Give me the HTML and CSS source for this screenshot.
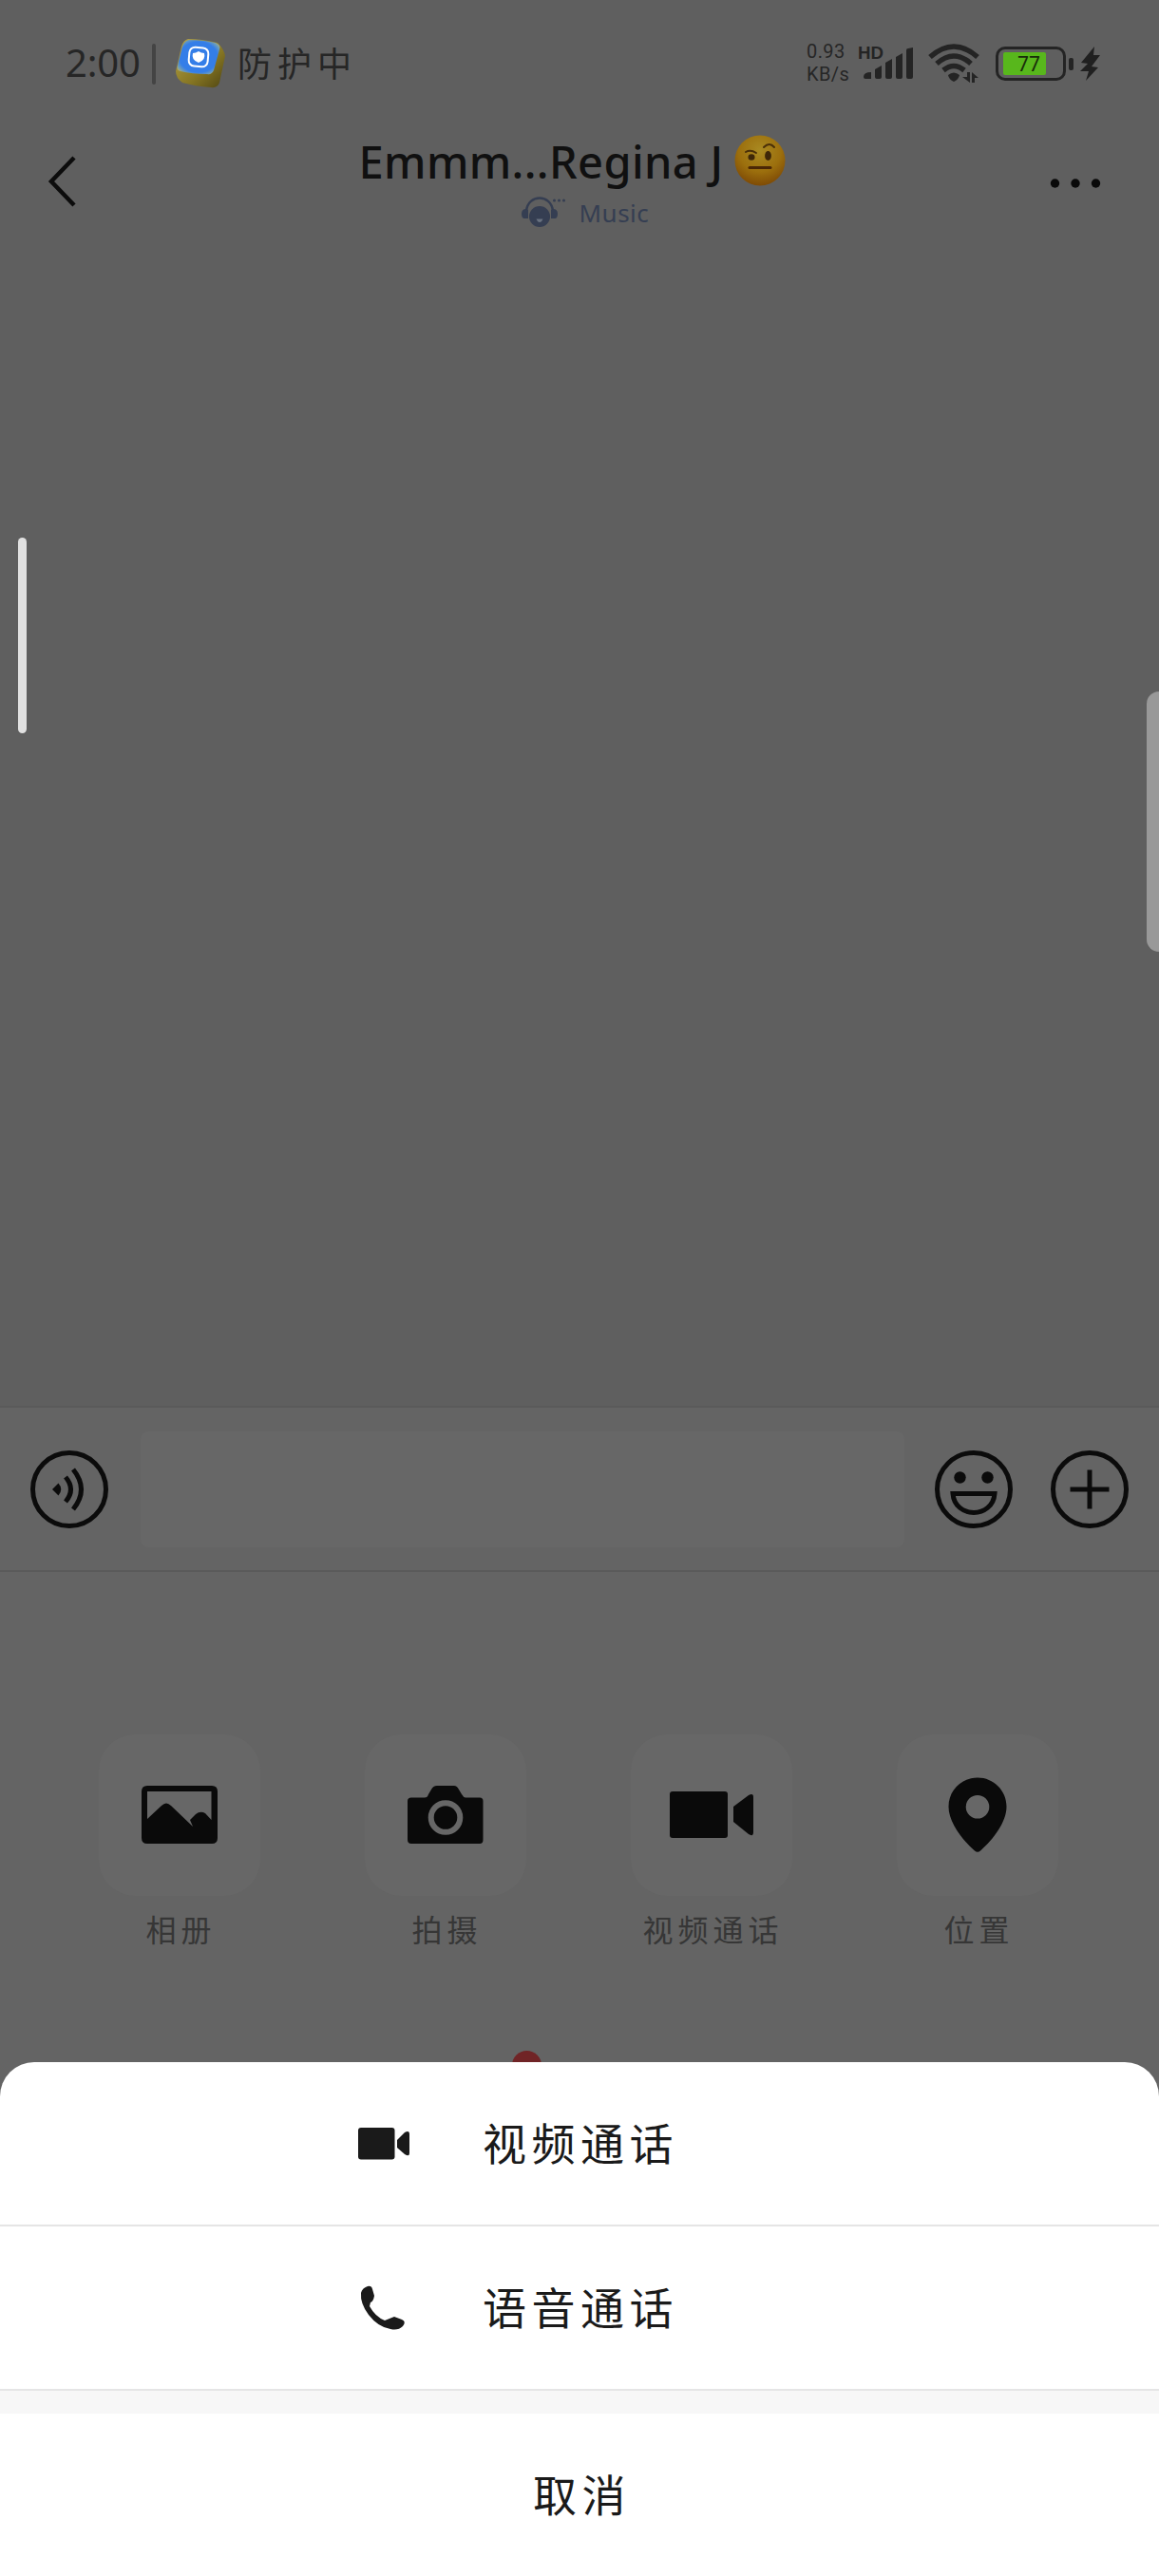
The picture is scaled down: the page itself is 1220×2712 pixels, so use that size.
FILE: index.html
```html
<!DOCTYPE html>
<html lang="zh-CN">
<head>
<meta charset="utf-8">
<title>Emmm...Regina J</title>
<link rel="stylesheet" href="styles.css">
</head>
<body>
<main class="screen">
  <div class="status">
    <span class="clock">2:00</span>
    <span class="divider"></span>
    <svg class="guard" width="54" height="54" viewBox="0 0 54 54">
      <defs>
        <linearGradient id="side" x1="0" y1="0" x2="1" y2="1"><stop offset="0" stop-color="#b9a648"/><stop offset=".6" stop-color="#857523"/><stop offset="1" stop-color="#4f4512"/></linearGradient>
        <radialGradient id="face" r=".62"><stop offset=".72" stop-color="#347ee8"/><stop offset=".88" stop-color="#6e9dba"/><stop offset="1" stop-color="#bcae5c"/></radialGradient>
      </defs>
      <path d="M14 1 Q28 1 45 5 Q52 12 53 19 L47 47 Q45 53 38 52 Q22 51 8 47 Q1 42 1 35 L7 9 Q9 2 14 1Z" fill="url(#side)"/>
      <path d="M15 2 Q30 2 43 5 Q49 7 47 12 L41 34 Q39 39 34 38 Q18 38 6 35 Q1 34 3 29 L8 9 Q10 3 15 2Z" fill="url(#face)"/>
      <rect x="15" y="10" width="20" height="20" rx="6" fill="none" stroke="#fff" stroke-width="2" transform="rotate(5 25 20)"/>
      <path d="M25 14 Q28 16 31 16 Q33 23 25 26 Q17 23 19 16 Q22 16 25 14Z" fill="#fff"/>
    </svg>
    <span class="guard-text">防护中</span>
    <span class="speed"><span>0.93</span><span>KB/s</span></span>
    <svg class="signal" width="60" height="40" viewBox="0 0 60 40">
      <text class="hd" x="0" y="15" textLength="27" lengthAdjust="spacingAndGlyphs">HD</text>
      <g fill="#242424"><path d="M6 34Q6 29 14 29V36H8Q6 36 6 34Z"/><path d="M18 26L25 22V34Q25 36 23 36H20Q18 36 18 34Z"/><path d="M29 19L36 15V34Q36 36 34 36H31Q29 36 29 34Z"/><path d="M40 13L47 9V34Q47 36 45 36H42Q40 36 40 34Z"/><path d="M51 6Q51 4 53 4L58 3V34Q58 36 56 36H53Q51 36 51 34Z"/></g>
    </svg>
    <svg class="wifi" width="54" height="42" viewBox="0 0 54 42">
      <g fill="none" stroke="#242424" stroke-width="5.5"><path d="M2 14Q27 -8 52 14"/><path d="M9 21Q27 5 45 21"/><path d="M16 28Q27 19 38 28"/></g>
      <path d="M21 33Q27 28 33 33Q32 38 27 40Q22 38 21 33Z" fill="#242424"/>
      <path d="M41 30H44V41L36 35H41ZM46 41V30L53 36H49V41Z" fill="#242424"/>
    </svg>
    <span class="battery"><span class="charge">77</span></span>
    <span class="nub"></span>
    <svg class="bolt" width="22" height="38" viewBox="0 0 22 38"><path d="M15 1L1 18L8 19L0 27H9L6 37L19 23L12 22L21 10H14Z" fill="#202020"/></svg>
  </div>

  <header class="header">
    <svg class="back" width="30" height="54" viewBox="0 0 30 54"><path d="M27 2L3 27L27 52" fill="none" stroke="#0c0c0c" stroke-width="4.5"/></svg>
    <div class="titles">
      <h1 class="title"><span class="name">Emmm...Regina J</span>
        <svg width="54" height="54" viewBox="0 0 54 54">
          <defs><radialGradient id="skin" cx=".5" cy=".3" r=".7"><stop offset="0" stop-color="#a98a22"/><stop offset=".6" stop-color="#9c6f0d"/><stop offset="1" stop-color="#7e4a05"/></radialGradient></defs>
          <circle cx="27" cy="27" r="26.500" fill="url(#skin)"/>
          <ellipse cx="18" cy="23.500" rx="3.500" ry="3.300" fill="#3e2708"/><ellipse cx="35.500" cy="22" rx="3.400" ry="5" fill="#3e2708"/>
          <path d="M12 18Q17 15 23 19M31 13Q37 7 42 13" fill="none" stroke="#4a2f08" stroke-width="2" stroke-linecap="round"/>
          <path d="M16 34.500H38" stroke="#4b2705" stroke-width="3" stroke-linecap="round"/>
        </svg>
      </h1>
      <div class="mood">
        <svg width="46" height="32" viewBox="0 0 46 32">
          <path d="M5 14C7 -4 31 -4 33 14" fill="none" stroke="#353e52" stroke-width="2.500"/>
          <path d="M5 12L7 13V22H3Q0 22 0 17Q0 12 5 12ZM33 12L31 13V22H35Q38 22 38 17Q38 12 33 12Z" fill="#353e52"/>
          <circle cx="19" cy="20" r="11" fill="#353e52"/><path d="M15.500 22.500H22.500Q21 26 19 26Q17 26 15.500 22.500Z" fill="#68717f"/>
          <g fill="#353e52"><circle cx="34.500" cy="3" r="1.500"/><circle cx="39.500" cy="3" r="1.500"/><circle cx="44.500" cy="3" r="1.500"/></g>
        </svg>
        <span class="music">Music</span>
      </div>
    </div>
    <svg class="more" width="54" height="12" viewBox="0 0 54 12"><g fill="#0a0a0a"><circle cx="5.500" cy="6" r="4.700"/><circle cx="27" cy="6" r="4.700"/><circle cx="48.500" cy="6" r="4.700"/></g></svg>
  </header>

  <section class="chat"></section>

  <div class="composer">
    <svg width="82" height="82" viewBox="0 0 82 82"><g fill="none" stroke="#0b0b0b" stroke-width="5"><circle cx="41" cy="41" r="38.500"/><path d="M37 28Q48 41 37 54M45 20Q62 41 45 62"/></g><path d="M23 41L29.500 34.500Q35 41 29.500 47.500Z" fill="#0b0b0b"/></svg>
    <div class="input"></div>
    <svg class="smile" width="82" height="82" viewBox="0 0 82 82"><g fill="none" stroke="#0b0b0b" stroke-width="5"><circle cx="41" cy="41" r="38.500"/><path d="M19 45.500H63C61 72 21 72 19 45.500Z"/></g><circle cx="26.500" cy="28.500" r="6.200" fill="#0b0b0b"/><circle cx="55.500" cy="28.500" r="6.200" fill="#0b0b0b"/></svg>
    <svg width="82" height="82" viewBox="0 0 82 82"><g fill="none" stroke="#0b0b0b" stroke-width="5"><circle cx="41" cy="41" r="38.500"/><path d="M20.500 41H61.500M41 20.500V61.500"/></g></svg>
  </div>

  <section class="panel">
    <div class="tool"><div class="tile">
      <svg width="80" height="62" viewBox="0 0 80 62"><path fill-rule="evenodd" d="M6 0H74Q80 0 80 6V55Q80 61 74 61H6Q0 61 0 55V6Q0 0 6 0ZM6 6V35L21 21Q26 16 31 21L54 43L51 36L57 30Q62 26 67 29L73.500 36V6Z" fill="#0a0a0a"/></svg>
    </div><span>相册</span></div>
    <div class="tool"><div class="tile">
      <svg width="80" height="62" viewBox="0 0 80 62"><path d="M4 12.500H18Q21 12.500 22 9L25 4Q27 0 31 0H49Q52 0 54 4L57 9Q59 12.500 61 12.500H76Q79.500 12.500 79.500 16V57Q79.500 61 76 61H4Q0 61 0 57V16Q0 12.500 4 12.500Z" fill="#0a0a0a"/><circle cx="40" cy="33.500" r="15.300" fill="none" stroke="#676767" stroke-width="6"/></svg>
    </div><span>拍摄</span></div>
    <div class="tool"><div class="tile">
      <svg class="cam" width="90" height="50" viewBox="0 0 90 50"><rect width="61" height="49" rx="3" fill="#0a0a0a"/><path d="M67 16L83 4Q88 1 88 6V43Q88 48 83 45L67 32Z" fill="#0a0a0a"/></svg>
    </div><span>视频通话</span></div>
    <div class="tool"><div class="tile">
      <svg width="62" height="80" viewBox="0 0 62 80"><path fill-rule="evenodd" d="M31 0.500C48 .5 61.500 14 61.500 31C61.500 47 48 65 34 77.500Q31 80 28 77.500C14 65 .5 47 .5 31C.5 14 14 .5 31 .5ZM31 19A12.300 12.300 0 1 0 31 43.600A12.300 12.300 0 1 0 31 19Z" fill="#0a0a0a"/></svg>
    </div><span>位置</span></div>
  </section>

  <i class="grip"></i>
  <i class="edge"></i>
  <i class="badge"></i>

  <section class="sheet">
    <div class="option">
      <svg width="54" height="34" viewBox="0 0 54 34"><rect width="38.500" height="33.500" rx="3" fill="#1a1a1a"/><path d="M41 13L49 5Q54 2 54 7V27Q54 31 49 28L41 21Z" fill="#1a1a1a"/></svg>
      <span>视频通话</span>
    </div>
    <div class="option">
      <svg width="54" height="48" viewBox="0 0 54 48"><path d="M10 1Q14 0 15 4L17 11Q16 17 13 18L12 22Q18 33 28 37L38 33L46 36Q51 38 47 43Q42 48 34 46Q21 44 11 31Q2 19 3 8Q4 3 10 1Z" fill="#1a1a1a"/></svg>
      <span>语音通话</span>
    </div>
    <div class="gap"></div>
    <div class="cancel">取消</div>
  </section>
</main>
</body>
</html>
```
FILE: styles.css
```css
* { box-sizing: border-box; }
body { margin: 0; background: #5f5f5f; font-family: "Noto Sans", "Noto Sans CJK SC", sans-serif; }
svg { display: block; flex: none; overflow: visible; }
.screen { position: relative; display: flex; flex-direction: column; width: 1220px; height: 2712px; overflow: hidden; }

.status { display: flex; align-items: center; height: 134px; padding: 0 61px 0 69px; color: #262626; }
.clock { width: 91px; padding-bottom: 3px; font-size: 40px; letter-spacing: -.2px; }
.divider { width: 4px; height: 43px; border-radius: 2px; background: #444; }
.guard { margin-left: 20px; }
.guard-text { margin: 0 0 4px 12px; font: 36px/48px "Noto Sans CJK SC", sans-serif; letter-spacing: 6px; }
.speed { display: flex; flex-direction: column; width: 54px; margin-left: auto; padding-bottom: 3px; font: 20px/24px Roboto, sans-serif; letter-spacing: .4px; }
.hd { font: bold 18px "Liberation Sans", sans-serif; fill: #242424; }
.wifi { margin-left: 14px; }
.battery { width: 74px; height: 36px; margin-left: 17px; padding: 3px 5px; border: 3px solid #242424; border-radius: 10px; }
.charge { display: block; width: 45px; height: 24px; padding-left: 15px; border-radius: 2px; background: #58b71c; color: #182c0a; font-size: 21px; line-height: 24px; }
.nub { width: 5px; height: 13px; margin-left: 3px; border-radius: 2px; background: #242424; }
.bolt { margin-left: 7px; }

.header { display: flex; align-items: flex-start; justify-content: space-between; height: 120px; padding: 0 61px 0 51px; }
.back { margin-top: 30px; }
.more { margin-top: 53px; }
.titles { display: flex; flex-direction: column; align-items: flex-start; width: 449px; margin-left: 18px; }
.title { display: flex; align-items: center; justify-content: space-between; width: 449px; height: 70px; margin: 0; color: #101010; font-size: 47px; font-weight: 500; letter-spacing: .35px; }
.name { padding-top: 3px; line-height: 67px; white-space: nowrap; }
.mood { display: flex; align-items: center; gap: 15px; height: 40px; margin-left: 171px; color: #353e52; }
.music { font-size: 26px; letter-spacing: .5px; line-height: 36px; }

.chat { flex: 1; }
.composer { display: flex; align-items: center; flex: none; height: 175px; padding: 0 32px; border-top: 2px solid #5a5a5a; border-bottom: 2px solid #5a5a5a; background: #646464; }
.input { width: 804px; height: 122px; margin: 0 32px 0 34px; border-radius: 8px; background: #676767; }
.smile { margin-right: 40px; }

.panel { display: grid; grid-template-columns: repeat(4, 280px); flex: none; height: 1057px; padding: 171px 0 0 49px; background: #646464; }
.tool { display: flex; flex-direction: column; align-items: center; height: 240px; color: #363636; font: 32px/48px "Noto Sans CJK SC", sans-serif; letter-spacing: 5px; }
.tool span { margin: 10px -3px 0 0; }
.tile { display: flex; align-items: center; justify-content: center; width: 170px; height: 170px; border-radius: 38px; background: #676767; }
.cam { margin-left: 2px; }

.grip, .edge, .badge { position: absolute; }
.grip { left: 19px; top: 566px; width: 9px; height: 206px; border-radius: 5px; background: #e1e1e1; }
.edge { right: 0; top: 728px; width: 13px; height: 274px; border-radius: 13px 0 0 13px; background: #999; }
.badge { left: 539px; top: 2159px; width: 31px; height: 31px; border-radius: 50%; background: #702426; }

.sheet { position: absolute; left: 0; right: 0; bottom: 0; overflow: hidden; border-radius: 36px 36px 0 0; background: #fff; color: #1a1a1a; font: 46px/68px "Noto Sans CJK SC", sans-serif; letter-spacing: 5.500px; }
.option { display: flex; align-items: center; gap: 77px; height: 173px; padding-left: 377px; border-bottom: 2px solid #e5e5e5; }
.option span { padding-bottom: 5px; }
.gap { height: 24px; background: #f7f7f7; }
.cancel { height: 171px; padding-left: 5px; line-height: 167px; text-align: center; }
```
